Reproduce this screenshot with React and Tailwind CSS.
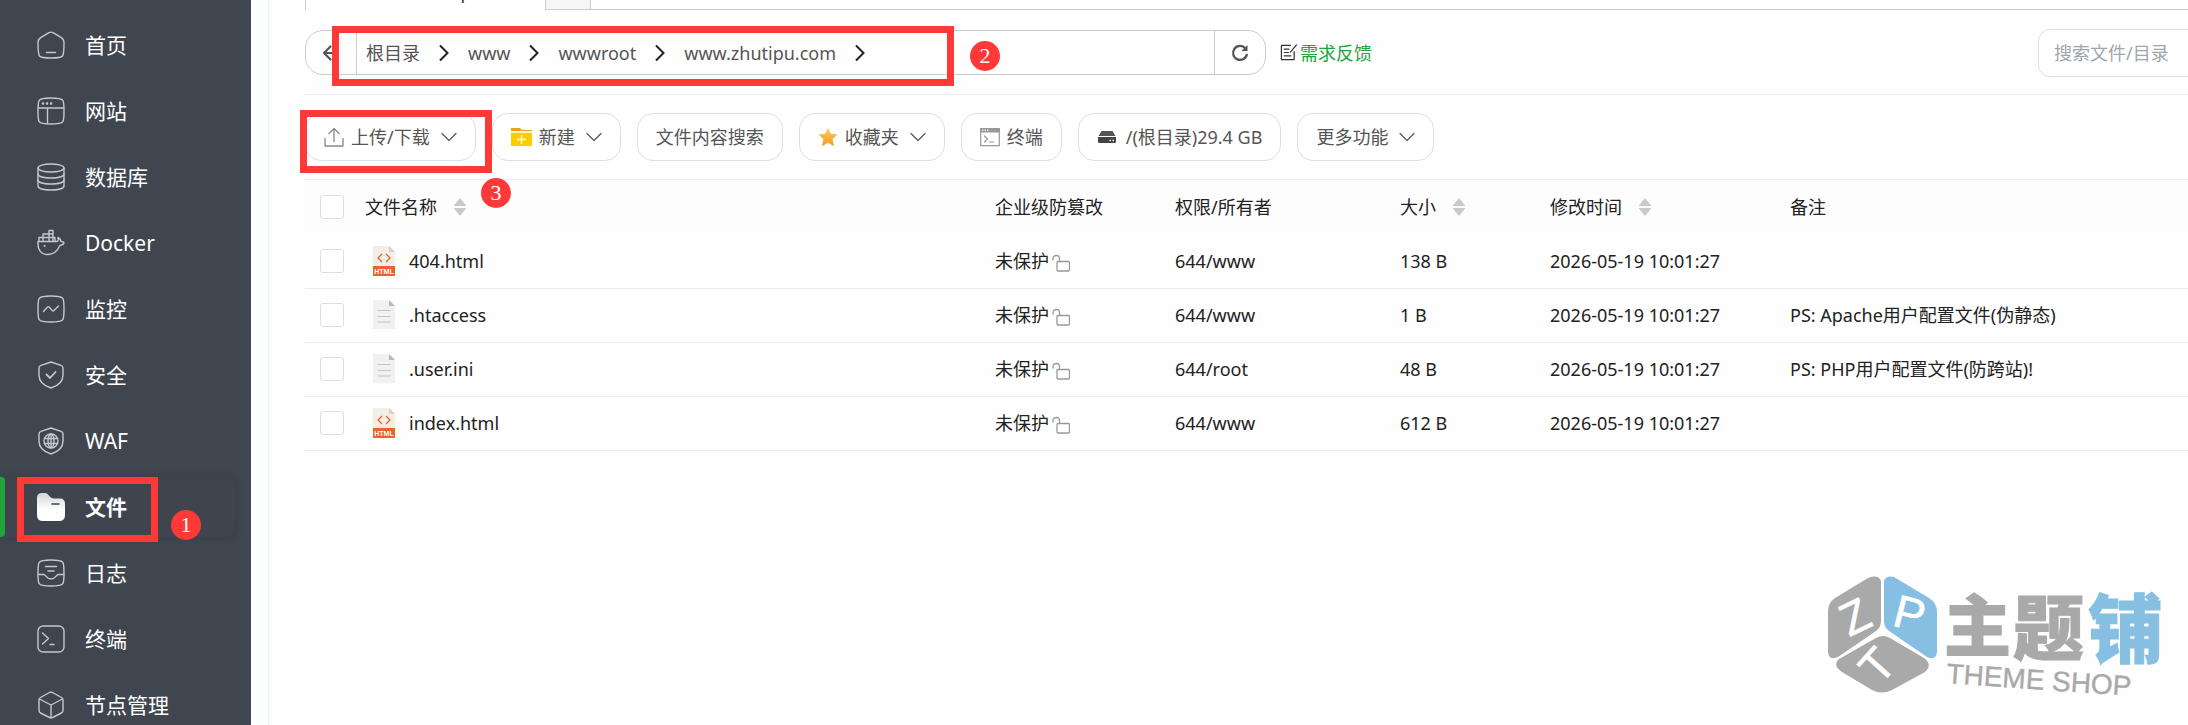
import React, { useState } from "react";

const Icon = ({ children, className = "w-7 h-7", box = 28, width = 1.4 }) => (
  <svg
    viewBox={`0 0 ${box} ${box}`}
    className={`${className} shrink-0`}
    fill="none"
    stroke="currentColor"
    strokeWidth={width}
    strokeLinecap="round"
    strokeLinejoin="round"
    aria-hidden="true"
  >
    {children}
  </svg>
);

const squircle =
  "M14 1C22 1 24.500 1.500 25.800 3.300C27 5 27 8 27 14C27 20 27 23 25.800 24.700C24.500 26.500 22 27 14 27C6 27 3.500 26.500 2.200 24.700C1 23 1 20 1 14C1 8 1 5 2.200 3.300C3.500 1.500 6 1 14 1Z";
const shield =
  "M14 1L24 4.300Q26 5 26 7V14C26 20.500 20.500 25 14 27C7.500 25 2 20.500 2 14V7Q2 5 4 4.300Z";

const menuItems = [
  {
    name: "首页",
    icon: (
      <Icon>
        <path d="M12 1.600Q14 .6 16 1.600L24 6.400Q27 8.300 27 11.500C27 20 27 23 25.500 25C24 27 20 27 14 27C8 27 4 27 2.500 25C1 23 1 20 1 11.500Q1 8.300 4 6.400Z" />
        <path d="M9.500 21.500H18.500" />
      </Icon>
    ),
  },
  {
    name: "网站",
    icon: (
      <Icon>
        <path d={squircle} />
        <path d="M1.500 11H26.500M10.500 11V26.500" />
        <path d="M6 6.500H6.100M10 6.500H10.100M14 6.500H14.100" strokeWidth="2.4" />
      </Icon>
    ),
  },
  {
    name: "数据库",
    icon: (
      <Icon>
        <ellipse cx="14" cy="5" rx="13" ry="4" />
        <path d="M1 5V23C1 25.500 7 27 14 27C21 27 27 25.500 27 23V5" />
        <path d="M1 11C1 13.500 7 15 14 15C21 15 27 13.500 27 11M1 17C1 19.500 7 21 14 21C21 21 27 19.500 27 17" />
      </Icon>
    ),
  },
  {
    name: "Docker",
    icon: (
      <Icon>
        <path d="M1 12.500H19.500C21 12.500 21.500 11 21 8.500C23 9.500 23.800 11 23.800 12.500C25.500 12.300 27 13 27 13.800C26.500 15.500 25 16.200 23 16.200C20.500 22 17 25.500 10.500 25.500C4.500 25.500 .5 21.500 1 12.500Z" />
        <path d="M2 12.500V8.500H18V12.500M6 12.500V5H16V1.500H12V12.500M16 5V12.500" />
        <path d="M7.500 17H7.600" strokeWidth="2" />
      </Icon>
    ),
  },
  {
    name: "监控",
    icon: (
      <Icon>
        <path d={squircle} />
        <path d="M6.500 16.500L10.500 12Q11.300 11.300 12 12L15.500 15.700Q16.300 16.300 17 15.500L21.500 11" />
      </Icon>
    ),
  },
  {
    name: "安全",
    icon: (
      <Icon>
        <path d={shield} />
        <path d="M9.500 13.500L13 17L18.500 11" strokeWidth="1.8" />
      </Icon>
    ),
  },
  {
    name: "WAF",
    icon: (
      <Icon>
        <path d={shield} />
        <circle cx="14" cy="14" r="7" />
        <ellipse cx="14" cy="14" rx="3" ry="7" />
        <path d="M7.500 11.500H20.500M7.500 16.500H20.500M14 7V21" />
      </Icon>
    ),
  },
  {
    name: "文件",
    icon: (
      <svg viewBox="0 0 28 28" className="w-7 h-7 shrink-0" aria-hidden="true">
        <defs>
          <linearGradient id="folderFill" x1="0" y1="0" x2="0" y2="1">
            <stop offset="0" stopColor="#d3d6da" />
            <stop offset="0.6" stopColor="#fff" />
          </linearGradient>
        </defs>
        <path
          d="M0 5Q0 0 5 0H8C11.500 0 12.500 5.500 17 5.500H23Q28 5.500 28 11V22Q28 28 22 28H6Q0 28 0 22Z"
          fill="url(#folderFill)"
        />
        <path d="M15 11H22" stroke="#40464f" strokeWidth="1.6" strokeLinecap="round" />
      </svg>
    ),
  },
  {
    name: "日志",
    icon: (
      <Icon>
        <path d={squircle} />
        <path d="M8.500 7.500H19.500M11 12H17M1.200 15.500H6.500C9 15.500 9 20 14 20C19 20 19 15.500 21.500 15.500H26.800" />
      </Icon>
    ),
  },
  {
    name: "终端",
    icon: (
      <Icon>
        <rect x="1" y="1" width="26" height="26" rx="5" />
        <path d="M5.500 8L11.500 13.500L5.500 19M13 19.500H17" />
      </Icon>
    ),
  },
  {
    name: "节点管理",
    icon: (
      <Icon>
        <path d="M12.500 1.500Q14 .8 15.500 1.500L24.500 6.500Q26 7.300 26 9V19.500Q26 21 24.500 22L15.500 26.500Q14 27.300 12.500 26.500L3.500 22Q2 21 2 19.500V9Q2 7.300 3.500 6.500Z" />
        <path d="M2.500 8L14 14L25.500 8M14 14V27" />
      </Icon>
    ),
  },
];

const crumbs = ["根目录", "www", "wwwroot", "www.zhutipu.com"];

const files = [
  { name: "404.html", type: "html", owner: "644/www", size: "138 B", time: "2026-05-19 10:01:27", remark: "" },
  { name: ".htaccess", type: "text", owner: "644/www", size: "1 B", time: "2026-05-19 10:01:27", remark: "PS: Apache用户配置文件(伪静态)" },
  { name: ".user.ini", type: "text", owner: "644/root", size: "48 B", time: "2026-05-19 10:01:27", remark: "PS: PHP用户配置文件(防跨站)!" },
  { name: "index.html", type: "html", owner: "644/www", size: "612 B", time: "2026-05-19 10:01:27", remark: "" },
];

const ChevronDown = () => (
  <Icon box={16} width={1.2} className="w-4 h-4 ml-[11px]">
    <path d="M1 4.500L8 11.500L15 4.500" />
  </Icon>
);

const SortArrows = () => (
  <svg viewBox="0 0 14 18" className="w-[14px] h-[18px] shrink-0" fill="#c8c9cc" aria-hidden="true">
    <path d="M7 0L13.500 8H.5ZM7 18L13.500 10H.5Z" />
  </svg>
);

const FileIcon = ({ type }) =>
  type === "html" ? (
    <svg viewBox="0 0 22 30" className="w-[22px] h-[30px] shrink-0" aria-hidden="true">
      <path d="M0 0H16L22 6V21H0Z" fill="#efefe8" />
      <path d="M16 0L22 6H16Z" fill="#dccfc4" />
      <path d="M9 8L5 12L9 16M13 8L17 12L13 16" fill="none" stroke="#e9622f" strokeWidth="1.3" />
      <rect y="20" width="22" height="10" fill="#e9622f" />
      <text x="11" y="28" textAnchor="middle" fontSize="7" fontWeight="bold" fill="#fff" fontFamily="Liberation Sans, sans-serif">
        HTML
      </text>
    </svg>
  ) : (
    <svg viewBox="0 0 22 30" className="w-[22px] h-[30px] shrink-0" aria-hidden="true">
      <path d="M0 0H16L22 6V29H0Z" fill="#f1f1f1" />
      <path d="M16 0L22 6H16Z" fill="#b9b9b9" />
      <path d="M4.500 10.500H18M4.500 16.500H18M4.500 22H18" stroke="#c6c6c6" strokeWidth="1.2" />
    </svg>
  );

const Unlock = () => (
  <Icon box={18} width={1.3} className="w-[18px] h-[18px] ml-[3px] mt-1 text-[#999]">
    <rect x="5" y="7.500" width="12.500" height="9.500" rx="1" />
    <path d="M7.500 7.500V4.500Q7.500 1.500 4.500 1.500Q1 1.500 1 4.500V6" />
  </Icon>
);

const ToolButton = ({ icon, children, dropdown }) => (
  <button
    type="button"
    className="h-12 px-[18px] flex items-center rounded-2xl border border-[#dcdfe6] bg-white whitespace-nowrap text-[#555]"
  >
    {icon}
    <span>{children}</span>
    {dropdown && <ChevronDown />}
  </button>
);

const Checkbox = ({ label, ...props }) => (
  <input
    type="checkbox"
    aria-label={label}
    className="block w-6 h-6 appearance-none rounded-[3px] border border-[#dcdfe6] bg-white checked:bg-[#20a53a]"
    {...props}
  />
);

// Numbered step marker
const Step = ({ className, children }) => (
  <span
    className={`absolute z-20 w-[30px] h-[30px] rounded-full bg-[#ff3838] text-white text-[22px] leading-[30px] text-center font-['Liberation_Serif',serif] ${className}`}
  >
    {children}
  </span>
);

const Frame = ({ className }) => (
  <span className={`absolute z-10 border-[7px] border-[#ff3838] pointer-events-none ${className}`} />
);

const Sidebar = () => (
  <nav className="w-[251px] shrink-0 bg-[#40464f] pt-[15px] flex flex-col gap-[6px] text-[21px]">
    {menuItems.map((item) => {
      const active = item.name === "文件";
      return (
        <div key={item.name} className="relative shrink-0">
          <a
            href="#"
            className={`h-[60px] mr-4 pl-[37px] flex items-center gap-5 rounded-r-lg ${
              active
                ? "bg-[#3f444f] font-bold text-white shadow-[0_0_6px_rgba(50,54,62,0.6)]"
                : "text-[#c3c8d1]"
            }`}
          >
            {item.icon}
            <span className="text-white">{item.name}</span>
          </a>
          {active && (
            <>
              <span className="absolute left-0 top-0 w-[5px] h-full rounded-r-sm bg-[#20a53a]" />
              <Frame className="left-[17px] top-0 w-[141px] h-[65px]" />
              <Step className="left-[171px] top-[33px]">1</Step>
            </>
          )}
        </div>
      );
    })}
  </nav>
);

const PathBar = () => (
  <div className="h-[85px] pt-[1px] flex items-center border-b border-[#ededf0]">
    <div className="relative flex-1 max-w-[961px] h-[45px] flex border border-[#ccc] rounded-[18px]">
      <button type="button" aria-label="返回" className="w-[51px] flex items-center justify-center border-r border-[#ccc] text-[#555]">
        <Icon box={18} width={2.2} className="w-[18px] h-[18px]">
          <path d="M16 9H2M8.500 2.500L2 9L8.500 15.500" />
        </Icon>
      </button>
      <div className="flex-1 pl-[9px] flex items-center gap-[19px] text-[#555]">
        {crumbs.map((crumb) => (
          <React.Fragment key={crumb}>
            <a href="#">{crumb}</a>
            <svg viewBox="0 0 10 18" className="w-[10px] h-[18px] shrink-0" fill="none" stroke="#222" strokeWidth="2" aria-hidden="true">
              <path d="M1 1.500L8.500 9L1 16.500" />
            </svg>
          </React.Fragment>
        ))}
      </div>
      <button type="button" aria-label="刷新" className="w-[51px] flex items-center justify-center border-l border-[#ccc] text-[#555]">
        <Icon box={18} width={2.2} className="w-[18px] h-[18px]">
          <path d="M14.500 4.500A7 7 0 1 0 16 10" strokeLinecap="butt" />
          <path d="M16.500 1V7H10.500Z" fill="currentColor" stroke="none" />
        </Icon>
      </button>
      <Frame className="left-[26px] -top-[5px] w-[622px] h-[60px]" />
      <Step className="left-[664px] top-[10px]">2</Step>
    </div>
    <a href="#" className="ml-[14px] flex items-center gap-[3px] text-[#20a53a] whitespace-nowrap">
      <Icon box={18} width={1.3} className="w-[17px] h-[17px] text-[#333]">
        <path d="M11 1.500H1.500V16.500H15V8" />
        <path d="M4.500 5.500H9.500M4.500 9H9M4.500 12.500H11.500M11 8.500L17.500 1" />
      </Icon>
      需求反馈
    </a>
    <input
      type="text"
      aria-label="搜索文件/目录"
      placeholder="搜索文件/目录"
      className="ml-auto -mr-4 w-[166px] h-12 pl-[15px] rounded-xl border border-[#dcdfe6] bg-white placeholder:text-[#a0a4ab] focus:outline-none"
    />
  </div>
);

const Toolbar = () => (
  <div className="h-[85px] flex items-center gap-4 border-b border-[#ededf0]">
    <div className="relative">
      <ToolButton
        dropdown
        icon={
          <Icon box={20} width={1.3} className="w-5 h-5 mr-[7px] text-[#888]">
            <path d="M1 11V19H19V11M10 15V2M4.500 7L10 1.500L15.500 7" strokeLinecap="butt" />
          </Icon>
        }
      >
        上传/下载
      </ToolButton>
      <Frame className="-left-[5px] -top-[3px] w-[192px] h-[63px]" />
      <Step className="left-[176px] top-[65px]">3</Step>
    </div>
    <ToolButton
      dropdown
      icon={
        <svg viewBox="0 0 21 18" className="w-[21px] h-[18px] mr-[7px]" aria-hidden="true">
          <path d="M0 0H9L11 2H21V6H0Z" fill="#f0a020" />
          <rect y="3" width="21" height="2" fill="#fff3c4" />
          <rect y="5" width="21" height="13" fill="#fc0" />
          <path d="M10.500 7V16M6 11.500H15" stroke="#fff" strokeWidth="1.3" />
        </svg>
      }
    >
      新建
    </ToolButton>
    <ToolButton>文件内容搜索</ToolButton>
    <ToolButton
      dropdown
      icon={
        <svg viewBox="0 0 20 20" className="w-5 h-5 mr-[7px]" aria-hidden="true">
          <defs>
            <linearGradient id="starFill" x1="0" y1="0" x2="0" y2="1">
              <stop offset="0" stopColor="#f9cf6a" />
              <stop offset="1" stopColor="#f79a14" />
            </linearGradient>
          </defs>
          <path
            d="M10 .8L12.800 6.800L19.500 7.600L14.600 12.200L16 19.200L10 15.800L4 19.200L5.400 12.200L.5 7.600L7.200 6.800Z"
            fill="url(#starFill)"
          />
        </svg>
      }
    >
      收藏夹
    </ToolButton>
    <ToolButton
      icon={
        <Icon box={20} width={1.2} className="w-5 h-5 mr-[7px] text-[#999]">
          <rect x=".7" y="1.700" width="18.600" height="17" />
          <rect x=".7" y="1.700" width="18.600" height="3.300" fill="currentColor" />
          <path d="M2.500 3.200H3M5 3.200H5.500M7.500 3.200H8" stroke="#fff" />
          <path d="M4.500 9L7.500 12L4.500 15M9.500 15H13.500" />
        </Icon>
      }
    >
      终端
    </ToolButton>
    <ToolButton
      icon={
        <svg viewBox="0 0 20 14" className="w-5 h-[14px] mr-[9px]" aria-hidden="true">
          <path d="M4.500 1H15.500L18.500 6H1.500Z" fill="#555" />
          <path d="M1 7H19V11.500Q19 13 17.500 13H2.500Q1 13 1 11.500Z" fill="#444" />
          <path d="M12.500 10.500H14M15.500 10.500H17" stroke="#fff" strokeWidth="1.5" />
        </svg>
      }
    >
      /(根目录)29.4 GB
    </ToolButton>
    <ToolButton dropdown>更多功能</ToolButton>
  </div>
);

const FileTable = () => {
  const [selected, setSelected] = useState([]);

  const toggle = (name) =>
    setSelected((prev) =>
      prev.includes(name) ? prev.filter((n) => n !== name) : [...prev, name]
    );

  return (
    <table className="w-full table-fixed text-left text-[#222]">
      <colgroup>
        <col className="w-[56px]" />
        <col className="w-[630px]" />
        <col className="w-[180px]" />
        <col className="w-[225px]" />
        <col className="w-[150px]" />
        <col className="w-[240px]" />
        <col />
      </colgroup>
      <thead>
        <tr className="h-[54px] bg-[#fdfdfe] [&>th]:font-normal [&>th]:pl-1">
          <th>
            <div className="pl-[11px]">
              <Checkbox
                label="全选"
                checked={selected.length === files.length}
                onChange={(e) => setSelected(e.target.checked ? files.map((f) => f.name) : [])}
              />
            </div>
          </th>
          <th>
            <div className="flex items-center gap-4">文件名称<SortArrows /></div>
          </th>
          <th>企业级防篡改</th>
          <th>权限/所有者</th>
          <th>
            <div className="flex items-center gap-4">大小<SortArrows /></div>
          </th>
          <th>
            <div className="flex items-center gap-4">修改时间<SortArrows /></div>
          </th>
          <th>备注</th>
        </tr>
      </thead>
      <tbody>
        {files.map((file) => (
          <tr key={file.name} className="h-[54px] border-b border-[#ededf0] [&>td]:pl-1">
            <td>
              <div className="pl-[11px]">
                <Checkbox
                  label={file.name}
                  checked={selected.includes(file.name)}
                  onChange={() => toggle(file.name)}
                />
              </div>
            </td>
            <td>
              <div className="pl-2 flex items-center gap-[14px]">
                <FileIcon type={file.type} />
                <a href="#">{file.name}</a>
              </div>
            </td>
            <td>
              <div className="flex items-center">未保护<Unlock /></div>
            </td>
            <td>{file.owner}</td>
            <td>{file.size}</td>
            <td className="whitespace-nowrap">{file.time}</td>
            <td className="whitespace-nowrap">{file.remark}</td>
          </tr>
        ))}
      </tbody>
    </table>
  );
};

const Watermark = () => (
  <svg
    viewBox="0 0 340 124"
    className="absolute right-[24px] bottom-[26px] w-[340px] h-[124px] overflow-visible"
    fontFamily="'Liberation Sans', sans-serif"
    role="img"
    aria-label="主题铺 THEME SHOP"
  >
    <path d="M44 3Q54 -1 57 6V46Q57 52 52 56L14 82Q4 86 4 76V36Q4 28 11 23Z" fill="#a9a9a9" />
    <path d="M60 6Q62 0 70 2L105 23Q113 28 113 37V77Q112 86 103 82L65 56Q60 52 60 46Z" fill="#86bfe2" />
    <path d="M15 84L52 63Q59 59 66 63L100 83Q109 90 101 97L68 115Q58 120 48 115L18 97Q8 90 15 84Z" fill="#a9a9a9" />
    <g fill="#fff" stroke="#fff" strokeWidth=".6" fontSize="46" textAnchor="middle">
      <text transform="translate(38 56) rotate(-26)">Z</text>
      <text transform="translate(82 54) rotate(14)">P</text>
      <text transform="translate(65 101) rotate(-48)">T</text>
    </g>
    <g fontFamily="'Noto Sans CJK SC', sans-serif" fontWeight="900" strokeWidth="1">
      <text x="120" y="76" fontSize="67" fill="#a9a9a9" stroke="#a9a9a9">主</text>
      <text x="189" y="79" fontSize="71" fill="#a9a9a9" stroke="#a9a9a9">题</text>
      <text x="264" y="82" fontSize="75" fill="#86bfe2" stroke="#86bfe2">铺</text>
    </g>
    <text transform="translate(122 108) rotate(4)" fontSize="28" fill="#a9a9a9" stroke="#a9a9a9" strokeWidth=".4">
      THEME SHOP
    </text>
  </svg>
);

const App = () => {
  return (
    <div className="h-screen flex overflow-hidden bg-[#fbfefd] text-[18px] leading-6 font-['Noto_Sans','Noto_Sans_CJK_SC',sans-serif]">
      <Sidebar />
      <main className="relative flex-1 min-w-0 ml-[17px] pl-9 border-l border-[#f3f5f4] bg-[#fefefe] overflow-hidden">
        {/* Open folder tabs, scrolled up to their lower edge */}
        <div className="h-[10px] flex items-end overflow-hidden">
          <div className="w-[241px] h-10 shrink-0 pt-[10px] pl-[66px] border-x border-[#ccc] text-[#333]">www.zhutipu.com</div>
          <button type="button" aria-label="新增标签" className="w-[45px] h-10 shrink-0 bg-[#f5f6f7] border-r border-b border-[#ccc]" />
          <div className="flex-1 border-b border-[#ccc]" />
        </div>
        <PathBar />
        <Toolbar />
        <FileTable />
        <Watermark />
      </main>
    </div>
  );
};

export default App;
